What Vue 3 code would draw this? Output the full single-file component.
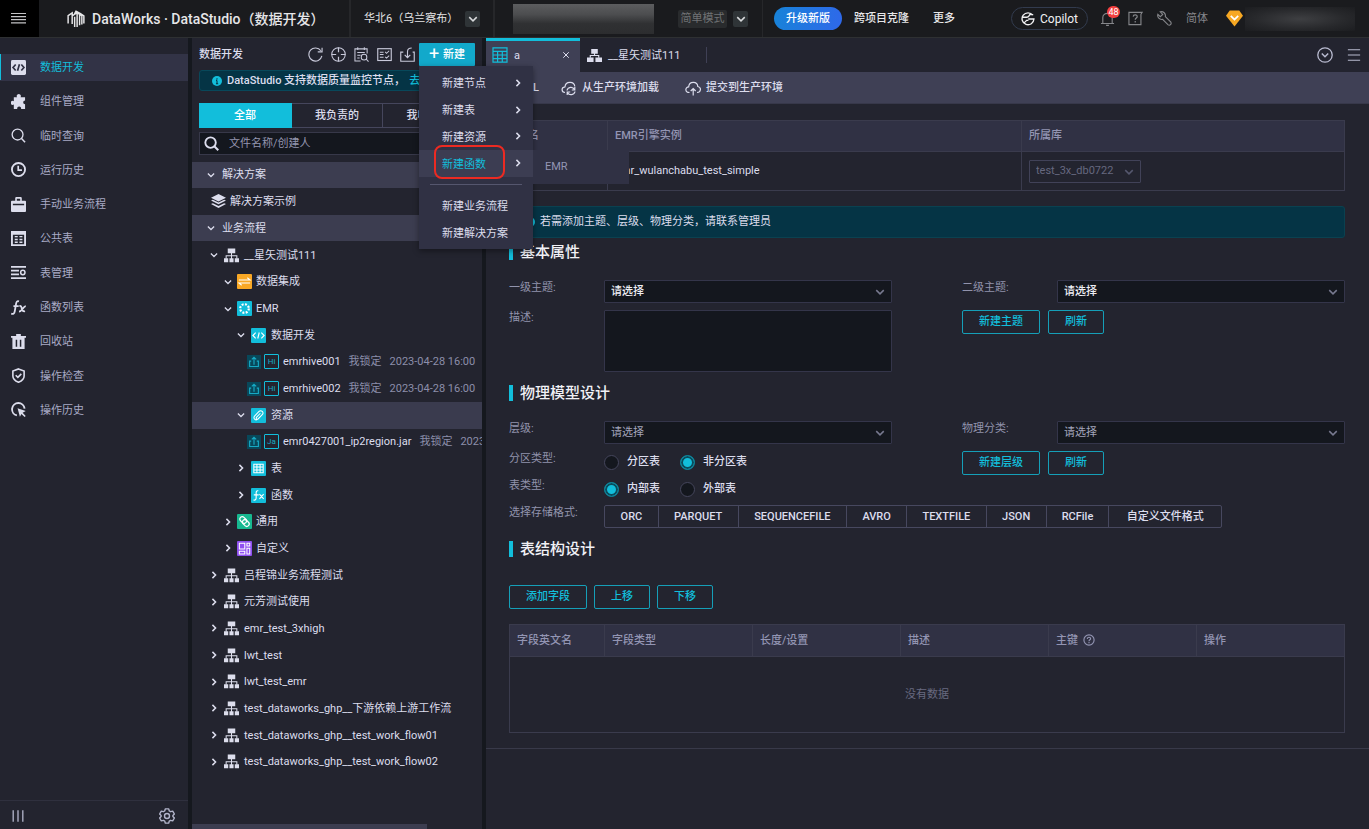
<script setup>
import { h, ref } from 'vue'

const S = 'fill="none" stroke="currentColor"'
const icons = {
  down: `<path ${S} stroke-width="2" d="M3 5.5l5 5 5-5"/>`,
  right: `<path ${S} stroke-width="2.4" d="M5.5 3l5 5-5 5"/>`,
  burger: `<path ${S} stroke-width="1.2" d="M0 3.5h15M0 6.6h15M0 9.7h15M0 12.8h15"/>`,
  menu: `<path ${S} stroke-width="1.4" d="M1 2h14M1 8h14M1 14h14"/>`,
  logo: `<path ${S} stroke-width="1.3" d="M1 12V5l3.6-2.4v9.9M4.6 5.2L9 2.4v12.8M6.8 15V6M11.2 13.6V3.8L9 2.4M6.6 3.6L8 1l4 2.2 3 2V12M13.2 12.8V5.2L11.2 3.8"/>`,
  code: `<rect x="0" y="0" width="16" height="16" rx="1.5" fill="currentColor"/><path fill="none" stroke="#303144" stroke-width="1.8" d="M5 4.8L2.2 8 5 11.2M11 4.8L13.8 8 11 11.2M9 4.5l-2 7"/>`,
  puzzle: `<path fill="currentColor" d="M3 3.4h3.4a2.2 2.2 0 1 1 3.8 0H15v3.5a2 2 0 1 0 0 4V16h-4.3a2.1 2.1 0 1 0-4 0H3v-4.8a2.2 2.2 0 1 1 0-3.6z"/>`,
  search: `<circle cx="7" cy="7" r="5.8" ${S} stroke-width="1.4"/><path ${S} stroke-width="1.6" d="M11 11l4 4.2"/>`,
  searchBold: `<circle cx="7" cy="7" r="5.6" ${S} stroke-width="2"/><path ${S} stroke-width="2.2" d="M11 11l4.2 4.2"/>`,
  clock: `<circle cx="8" cy="8" r="7" ${S} stroke-width="2"/><path ${S} stroke-width="1.8" d="M7.7 4v4.6h4"/>`,
  case: `<path fill="currentColor" fill-rule="evenodd" d="M4.5 4V1.2Q4.5 0 5.700 0h4.600Q11.500 0 11.500 1.200V4H15q1 0 1 1v10q0 1-1 1H1q-1 0-1-1V5q0-1 1-1zM6.200 4h3.600V1.800H6.200zM2 7.300v1.400h12V7.300z"/>`,
  grid: `<path fill="currentColor" fill-rule="evenodd" d="M0 0h16v16H0zM2 4v10h12V4z"/><path ${S} stroke-width="1.5" d="M4 6h3.200M9 6h3.200M4 9h3.200M9 9h3.200M4 12h3.200M9 12h3.200"/>`,
  manage: `<path ${S} stroke-width="1.7" d="M0 2h16M0 6h8.500M0 10h8.500M0 14h16"/><circle cx="12.600" cy="8" r="2.300" ${S} stroke-width="1.600"/>`,
  fx: `<path ${S} stroke-width="1.900" d="M8.500 1.500C6.500.8 5.800 2 5.500 3.600L4 12c-.4 2.400-1.500 3.500-3.800 2.600M2.600 6.500h5.600M9 6.500c1.600-.4 2 .3 2.500 2.500s1 3.500 3.500 3M15.800 6.500c-2.800 0-3.600 5.800-7.300 5.800"/>`,
  trash: `<path fill="currentColor" fill-rule="evenodd" d="M0 2h5.500V0h5v2H16v2h-1.500v12h-13V4H0zM5 6v7.500h1.600V6zM9.400 6v7.500H11V6z"/>`,
  shield: `<path ${S} stroke-width="1.700" d="M8 1l6 2.200v5.200c0 3-2.300 5.200-6 6.700-3.700-1.500-6-3.700-6-6.700V3.200z"/><path ${S} stroke-width="1.700" d="M5 7.700l2.300 2.200L11 6.200"/>`,
  cursor: `<path ${S} stroke-width="2" d="M6.300 14.300A6.700 6.700 0 1 1 14.500 7"/><path fill="currentColor" d="M7 6.600l8.700 3-3.300 1.900 3.300 3.300-1.200 1.200-3.400-3.300-1.600 3.100z"/>`,
  bars: `<path ${S} stroke-width="1.500" d="M2.500 1.500v13M8 1.500v13M13.500 1.500v13"/>`,
  gear: `<path ${S} stroke-width="1.400" stroke-linejoin="round" d="M6.300.9h3.400l.6 2.100 1.300.7 2.100-.6 1.700 2.900L13.900 7.500v1l1.500 1.500-1.700 2.900-2.100-.6-1.300.7-.6 2.100H6.300L5.700 13l-1.300-.7-2.100.6L.6 10 2.100 8.500v-1L.6 6l1.700-2.900 2.100.6L5.700 3z"/><circle cx="8" cy="8" r="2.500" ${S} stroke-width="1.400"/>`,
  refresh: `<path ${S} stroke-width="1.200" d="M14.800 9.500A7 7 0 1 1 13.700 4M15 .8v4.400h-4.600"/>`,
  target: `<circle cx="8" cy="8" r="7.200" ${S} stroke-width="1.100"/><path ${S} stroke-width="1.300" d="M8 .5v5M8 10.500v5M.5 8h5M10.500 8h5"/>`,
  listSearch: `<path ${S} stroke-width="1.100" d="M7 15H1V2h13v5M4 .3v3M11 .3v3M3.500 5.800h8M3.500 8.800h3.500M3.500 11.800h2.500"/><circle cx="10.700" cy="10.800" r="3" ${S} stroke-width="1.100"/><path ${S} stroke-width="1.100" d="M13 13l2.500 2.500"/>`,
  checks: `<rect x=".8" y="1.800" width="14.400" height="12.600" ${S} stroke-width="1.200"/><path ${S} stroke-width="1.100" d="M3 5.500h4M3 8h4M3 11h4M8.700 5.300l1.500 1.400L13 4M8.700 10.500l1.500 1.400L13 9.200"/>`,
  import: `<path ${S} stroke-width="1.200" d="M3.500 5.500H.8v9.700h14.400V5.500h-1.700M12.500 1C9.500 1 8 2.500 8 5v6M5 8.300l3 3 3-3"/>`,
  info: `<circle cx="8" cy="8" r="8" fill="currentColor"/><path fill="none" stroke="#053445" stroke-width="1.700" d="M8 3.500v2M8 7v5.500M6.500 7H8M6.300 12.500h3.600"/>`,
  layers: `<path fill="currentColor" d="M8 0l8 4-8 4-8-4zM0 7l2-.9 6 2.900 6-2.900 2 .9-8 4zM0 10.700l2-.9 6 2.900 6-2.900 2 .9-8 4.300z"/>`,
  flow: `<path fill="currentColor" d="M4 .5h8v5H4zM0 11h4.500v4.300H0zM5.800 11h4.400v4.300H5.800zM11.500 11H16v4.300h-4.500z"/><path ${S} stroke-width="1.100" d="M8 5v7M2.300 11.500V8.300h11.400v3.200"/>`,
  flowTab: `<path fill="currentColor" d="M4.500 1h7v5h-7zM0 10h7v5H0zM9 10h7v5H9z"/><path ${S} stroke-width="1.200" d="M8 5v3M3.500 10.500V8h9v2.500"/>`,
  swap: `<rect width="16" height="16" rx="1" fill="#f9a825"/><path fill="none" stroke="#fff" stroke-width="1.100" d="M2 6.500h12L11 4M14 9.500H2L5 12"/>`,
  emr: `<rect width="16" height="16" rx="1" fill="#12bedb"/><circle cx="8" cy="8" r="4.600" fill="none" stroke="#fff" stroke-width="2.300" stroke-dasharray="2.100 1.510"/>`,
  codeSq: `<rect width="16" height="16" rx="1" fill="#12bedb"/><path fill="none" stroke="#fff" stroke-width="1.200" d="M5 5L2 8l3 3M11 5l3 3-3 3M8.800 4.800l-1.600 6.400"/>`,
  clip: `<rect width="16" height="16" rx="1" fill="#12bedb"/><path fill="none" stroke="#fff" stroke-width="1.100" d="M11.500 7.500l-4 4.200c-2.500 2.500-6-.8-3.500-3.400l4.600-4.600c2-2 5.700.8 3.600 3.200l-4.500 4.600c-1.200 1.200-3-.3-1.700-1.700l4-4.200"/>`,
  tableSq: `<rect width="16" height="16" rx="1" fill="#12bedb"/><path fill="none" stroke="#fff" stroke-width="1.100" d="M3 3.500h10v9H3zM3 6.500h10M3 9.500h10M6.300 3.500v9M9.700 3.500v9"/>`,
  fxSq: `<rect width="16" height="16" rx="1" fill="#12bedb"/><path fill="none" stroke="#fff" stroke-width="1.200" d="M7.800 3C6 2.600 5.600 3.600 5.500 5v5.500c0 2-1 2.800-2.900 2.300M3 7.300h5.200M9 6.500l4.500 5M13.500 6.500l-4.500 5"/>`,
  link: `<rect width="16" height="16" rx="1" fill="#17b890"/><g fill="none" stroke="#fff" stroke-width="1.300"><rect x="2.600" y="3.800" width="8" height="5.200" rx="2.600" transform="rotate(45 6.600 6.400)"/><rect x="5.400" y="7" width="8" height="5.200" rx="2.600" transform="rotate(45 9.400 9.600)"/></g>`,
  custom: `<rect width="16" height="16" rx="1" fill="#8f4ff0"/><path fill="none" stroke="#fff" stroke-width="1.100" d="M2.500 2.500h5.800v6H2.500zM2.500 11h5.800v2.800H2.500zM10.600 2.500h3v2.800h-3zM10.600 7.800h3v6h-3z"/>`,
  share: `<rect width="16" height="16" fill="#08485a"/><path fill="none" stroke="#17a9c4" stroke-width="1.300" d="M4.800 7H3v6.200h10V7h-1.800M8 11V3M5.500 5L8 2.700 10.500 5"/>`,
  tableTab: `<path ${S} stroke-width="1.200" d="M1 .8h14v14.400H1zM1 4.400h14M1 8h14M1 11.600h14M5.600 4.400v10.800M10.300 4.400v10.800"/>`,
  close: `<path ${S} stroke-width="2" d="M2.500 2.500l11 11M13.500 2.500l-11 11"/>`,
  cloudDown: `<path ${S} stroke-width="1.200" d="M4 12.500C.3 12.300-.1 7.300 4 6.800 4.500 1 13.300.8 13.800 6.500"/><path ${S} stroke-width="1.200" d="M6 10.500a4 4 0 0 1 7.500-1M13.800 7v3h-3M14 11.500a4 4 0 0 1-7.500 1M6.200 15v-3h3"/>`,
  cloudUp: `<path ${S} stroke-width="1.200" d="M4.500 12.500C-.3 12.500-.1 7 3.700 6.800 4 1 12.400.8 12.800 6.500c3.900.6 3.300 6-.8 6M8.200 15.500V8.700M5.700 11L8.200 8.500l2.500 2.500"/>`,
  copilot: `<path ${S} stroke-width="1.500" d="M13.500 3.700A6.800 6.800 0 1 0 14.800 8H8.300M1.500 6h5.200c1 0 1.800-.5 2.500-1.500L10 3h4M3 13l3.500-3.500h2"/>`,
  bell: `<path ${S} stroke-width="1.200" d="M1 13.300h14M3 13V7c0-6 10-6 10 0v6M6.500 15.300h3M8 1v1.500"/>`,
  help: `<path ${S} stroke-width="1.200" d="M1 1.500h14l-1.200 2v11H1z"/><path ${S} stroke-width="1.300" d="M5.500 6c.2-2.600 4.600-2.400 4.300.2C9.600 7.500 7.700 7.500 7.700 9.300M7.700 10.700v1.600"/>`,
  wrench: `<path ${S} stroke-width="1.200" d="M3.500.9C6.700 0 9.600 2.700 8.900 6l5.900 5.900c1 2-1 4-2.900 2.900L6 8.900C2.700 9.600 0 6.700.9 3.600l2.600 2.500 2.600-2.500z"/>`,
  gem: `<path fill="#f7a823" d="M3.500.5h9L16 5.500 8 15.500 0 5.500z"/><path fill="none" stroke="#fff" stroke-width="1.700" d="M4.500 5.500L8 9l3.500-3.500"/>`,
  circleDown: `<circle cx="8" cy="8" r="7.200" ${S} stroke-width="1.300"/><path ${S} stroke-width="1.500" d="M4.800 6.500L8 9.700l3.200-3.200"/>`,
  question: `<circle cx="8" cy="8" r="6.800" ${S} stroke-width="1.500"/><path ${S} stroke-width="1.500" d="M5.800 6.500c0-3 4.400-2.700 4.400-.2C10.200 7.700 8 7.700 8 9.500M8 10.800v1.500"/>`
}
const Icon = (props) => h('svg', { viewBox: '0 0 16 16', 'aria-hidden': 'true', innerHTML: icons[props.name] })
Icon.props = ['name']

const nav = [
  ['code', '数据开发'], ['puzzle', '组件管理'], ['search', '临时查询'], ['clock', '运行历史'],
  ['case', '手动业务流程'], ['grid', '公共表'], ['manage', '表管理'], ['fx', '函数列表'],
  ['trash', '回收站'], ['shield', '操作检查'], ['cursor', '操作历史']
]
const panelTools = [['refresh', '刷新'], ['target', '定位'], ['listSearch', '代码搜索'], ['checks', '批量操作'], ['import', '导入']]
const tree = [
  { k: 'section', t: '解决方案', c: 'down' },
  { k: 'solution', t: '解决方案示例', i: 'layers' },
  { k: 'section', t: '业务流程', c: 'down' },
  { k: 'l1', t: '__星矢测试111', c: 'down', i: 'flow' },
  { k: 'l2', t: '数据集成', c: 'down', i: 'swap' },
  { k: 'l2', t: 'EMR', c: 'down', i: 'emr' },
  { k: 'l3', t: '数据开发', c: 'down', i: 'codeSq' },
  { k: 'leaf', t: 'emrhive001', tag: 'Hi' },
  { k: 'leaf', t: 'emrhive002', tag: 'Hi' },
  { k: 'l3', t: '资源', c: 'down', i: 'clip', on: true },
  { k: 'leaf', t: 'emr0427001_ip2region.jar', tag: 'Ja' },
  { k: 'l3', t: '表', c: 'right', i: 'tableSq' },
  { k: 'l3', t: '函数', c: 'right', i: 'fxSq' },
  { k: 'l2', t: '通用', c: 'right', i: 'link' },
  { k: 'l2', t: '自定义', c: 'right', i: 'custom' },
  ...['吕程锦业务流程测试', '元芳测试使用', 'emr_test_3xhigh', 'lwt_test', 'lwt_test_emr',
    'test_dataworks_ghp__下游依赖上游工作流', 'test_dataworks_ghp__test_work_flow01',
    'test_dataworks_ghp__test_work_flow02'].map((t) => ({ k: 'l1', t, c: 'right', i: 'flow' }))
]
const menuTop = ['新建节点', '新建表', '新建资源', '新建函数']
const formats = ['ORC', 'PARQUET', 'SEQUENCEFILE', 'AVRO', 'TEXTFILE', 'JSON', 'RCFile', '自定义文件格式']
const columns = ['字段英文名', '字段类型', '长度/设置', '描述', '主键', '操作']
const partition = ref('no')
const tableKind = ref('inner')
const description = ref('')
const keyword = ref('')
</script>

<template>
  <div class="app">
    <header class="top">
      <button class="burger" aria-label="菜单"><Icon name="burger" class="i16" /></button>
      <div class="brand"><Icon name="logo" class="i18" /><span>DataWorks · DataStudio（数据开发）</span></div>
      <div class="region"><span>华北6（乌兰察布）</span><button class="drop" aria-label="选择地域"><Icon name="down" class="i12" /></button></div>
      <div class="project">
        <span class="masked"></span>
        <span class="mode">简单模式</span>
        <button class="drop" aria-label="选择模式"><Icon name="down" class="i12" /></button>
      </div>
      <button class="upgrade">升级新版</button>
      <a href="#" class="toplink">跨项目克隆</a>
      <a href="#" class="toplink more">更多</a>
      <div class="account">
        <button class="copilot"><Icon name="copilot" class="i14" />Copilot</button>
        <button class="bell" aria-label="消息"><Icon name="bell" class="i15" /><span class="badge">48</span></button>
        <button aria-label="帮助"><Icon name="help" class="i15" /></button>
        <button aria-label="工具"><Icon name="wrench" class="i15" /></button>
        <button class="lang">简体</button>
        <div class="user"><Icon name="gem" class="i17" /><span class="username"></span></div>
      </div>
    </header>

    <div class="work">
      <nav class="side">
        <div class="navlist">
          <a v-for="([icon, text], n) in nav" :key="text" href="#" :class="{ on: n === 0 }">
            <Icon :name="icon" class="i15" /><span>{{ text }}</span>
          </a>
        </div>
        <div class="sidefoot">
          <button aria-label="收起"><Icon name="bars" class="i14" /></button>
          <button aria-label="设置"><Icon name="gear" class="i16" /></button>
        </div>
      </nav>

      <aside class="panel">
        <div class="panelhead">
          <h2>数据开发</h2>
          <div class="tools">
            <button v-for="[icon, text] in panelTools" :key="icon" :aria-label="text"><Icon :name="icon" class="i15" /></button>
          </div>
          <div class="create">
            <button class="new"><span class="plus">+</span><span class="newtext">新建</span></button>
            <div class="menu">
              <div class="group">
                <button v-for="m in menuTop" :key="m" :class="{ on: m === '新建函数' }">
                  <span>{{ m }}</span><Icon name="right" class="i10" />
                </button>
              </div>
              <hr />
              <div class="group two">
                <button><span>新建业务流程</span></button>
                <button><span>新建解决方案</span></button>
              </div>
              <div class="submenu"><button>EMR</button></div>
              <div class="mark"></div>
            </div>
          </div>
        </div>
        <p class="tip"><Icon name="info" class="i10" /><span>DataStudio 支持数据质量监控节点，</span><a href="#">去查看</a></p>
        <div class="filter">
          <button class="on">全部</button><button>我负责的</button><button>我收藏的</button>
        </div>
        <label class="find">
          <Icon name="searchBold" class="i15" />
          <input v-model="keyword" type="text" placeholder="文件名称/创建人" aria-label="文件名称/创建人" />
        </label>
        <ul class="tree">
          <li v-for="(r, n) in tree" :key="n" :class="[r.k, { on: r.on }]">
            <Icon v-if="r.c" :name="r.c" class="i10" />
            <Icon v-if="r.i" :name="r.i" class="i15" />
            <template v-if="r.tag">
              <Icon name="share" class="i14" /><span class="tag">{{ r.tag }}</span>
            </template>
            <span class="name">{{ r.t }}</span>
            <template v-if="r.tag"><span class="meta">我锁定</span><span class="meta">2023-04-28 16:00</span></template>
          </li>
        </ul>
        <div class="hscroll"></div>
      </aside>

      <main class="main">
        <div class="tabs">
          <div class="tab on"><Icon name="tableTab" class="i16 cyan" /><span>a</span><button aria-label="关闭"><Icon name="close" class="i8" /></button></div>
          <div class="tab"><Icon name="flowTab" class="i15" /><span>__星矢测试111</span></div>
          <div class="tabtools">
            <button aria-label="全部标签"><Icon name="circleDown" class="i16" /></button>
            <button aria-label="列表"><Icon name="menu" class="i14" /></button>
          </div>
        </div>
        <div class="bar">
          <button class="ddl">DDL</button>
          <button><Icon name="cloudDown" class="i16" />从生产环境加载</button>
          <button><Icon name="cloudUp" class="i16" />提交到生产环境</button>
        </div>
        <div class="body">
          <table class="meta-table">
            <thead><tr><th class="c1">表名</th><th class="c2">EMR引擎实例</th><th>所属库</th></tr></thead>
            <tbody>
              <tr>
                <td>a</td><td>emr_wulanchabu_test_simple</td>
                <td><div class="pick db"><select disabled aria-label="所属库"><option>test_3x_db0722</option></select><Icon name="down" class="i12" /></div></td>
              </tr>
            </tbody>
          </table>
          <p class="notice"><Icon name="info" class="i10" />若需添加主题、层级、物理分类，请联系管理员</p>

          <h3>基本属性</h3>
          <div class="cols">
            <div class="col">
              <div class="row"><label for="t1">一级主题:</label><div class="pick"><select id="t1"><option>请选择</option></select><Icon name="down" class="i12" /></div></div>
              <div class="row"><label for="desc">描述:</label><textarea id="desc" v-model="description"></textarea></div>
            </div>
            <div class="col">
              <div class="row"><label for="t2">二级主题:</label><div class="pick"><select id="t2"><option>请选择</option></select><Icon name="down" class="i12" /></div></div>
              <div class="acts"><button>新建主题</button><button>刷新</button></div>
            </div>
          </div>

          <h3>物理模型设计</h3>
          <div class="cols">
            <div class="col">
              <div class="row"><label for="lv">层级:</label><div class="pick dim"><select id="lv"><option>请选择</option></select><Icon name="down" class="i12" /></div></div>
              <div class="row" role="radiogroup" aria-label="分区类型">
                <span class="lab">分区类型:</span>
                <div class="radios">
                  <label><input v-model="partition" type="radio" name="partition" value="yes" />分区表</label>
                  <label><input v-model="partition" type="radio" name="partition" value="no" />非分区表</label>
                </div>
              </div>
              <div class="row" role="radiogroup" aria-label="表类型">
                <span class="lab">表类型:</span>
                <div class="radios">
                  <label><input v-model="tableKind" type="radio" name="kind" value="inner" />内部表</label>
                  <label><input v-model="tableKind" type="radio" name="kind" value="outer" />外部表</label>
                </div>
              </div>
            </div>
            <div class="col">
              <div class="row"><label for="pc">物理分类:</label><div class="pick dim"><select id="pc"><option>请选择</option></select><Icon name="down" class="i12" /></div></div>
              <div class="acts"><button>新建层级</button><button>刷新</button></div>
            </div>
          </div>
          <div class="row formatrow">
            <span class="lab">选择存储格式:</span>
            <div class="formats"><button v-for="f in formats" :key="f">{{ f }}</button></div>
          </div>

          <h3>表结构设计</h3>
          <div class="acts fieldacts"><button>添加字段</button><button>上移</button><button>下移</button></div>
          <table class="fields">
            <thead><tr><th v-for="(c, n) in columns" :key="c" :class="{ first: n === 0 }">{{ c }}<Icon v-if="c === '主键'" name="question" class="i12" /></th></tr></thead>
            <tbody><tr><td colspan="6">没有数据</td></tr></tbody>
          </table>
        </div>
      </main>
    </div>
  </div>
</template>

<style>
html, body { margin: 0; height: 100%; background: #23242f; }
#app { height: 100%; }
</style>

<style scoped>
.app { display: flex; flex-direction: column; min-height: 100vh; font: 11px/16px Roboto, "Noto Sans CJK SC", sans-serif; color: #dcdded; background: #23242f; }
.app * { box-sizing: border-box; }
svg { display: block; flex: none; }
button { font: inherit; color: inherit; background: none; border: 0; padding: 0; white-space: nowrap; }
a { color: inherit; text-decoration: none; white-space: nowrap; }
p, h2, h3, ul { margin: 0; padding: 0; font-size: inherit; }
.i8 { width: 8px; height: 8px; }
.i10 { width: 10px; height: 10px; }
.i12 { width: 12px; height: 12px; }
.i14 { width: 14px; height: 14px; }
.i15 { width: 15px; height: 15px; }
.i16 { width: 16px; height: 16px; }
.i17 { width: 17px; height: 17px; }
.i18 { width: 18px; height: 18px; }
.cyan { color: #12bedb; }

.top { display: flex; align-items: center; height: 38px; background: #1a1b1e; border-bottom: 1px solid #2e3032; padding-right: 14px; font-weight: 500; color: #e6e6e8; white-space: nowrap; }
.burger { width: 39px; height: 37px; padding-bottom: 2px; padding-right: 2px; background: #000; display: grid; place-items: center; align-self: flex-start; color: #c4c4c6; }
.brand { width: 312px; height: 37px; padding-left: 28px; display: flex; align-items: center; gap: 7px; border-right: 2px solid #26272a; font-size: 14px; }
.region { width: 144px; height: 37px; padding: 0 13px 0 13px; display: flex; align-items: center; justify-content: space-between; border-right: 2px solid #26272a; font-weight: 400; }
.drop { width: 15px; height: 16px; border-radius: 2px; background: #2f3437; display: grid; place-items: center; color: #d8dadc; }
.project { width: 268px; height: 37px; padding-left: 18px; display: flex; align-items: center; gap: 6px; border-right: 1px solid #26272a; font-weight: 400; }
.masked { width: 141px; height: 30px; margin-right: 18px; background: linear-gradient(#5c5d5f, #4c4d4f 35%, #303133 65%, #2c2d2f); }
.mode { width: 49px; height: 18px; line-height: 18px; text-align: center; background: #292b2d; color: #707274; border-radius: 2px; }
.upgrade { width: 68px; height: 23px; margin-left: 11px; border-radius: 12px; background: linear-gradient(100deg, #1783d8, #2f68ea); color: #fff; }
.toplink { margin-left: 12px; }
.more { margin-left: 24px; }
.account { margin-left: auto; display: flex; align-items: center; gap: 14px; color: #85868a; font-weight: 400; }
.copilot { width: 77px; height: 23px; display: flex; align-items: center; justify-content: center; gap: 5px; border: 1px solid #323b4e; border-radius: 12px; font-size: 12px; color: #f0f0f2; }
.bell { position: relative; margin: 0 -1px 0 -2px; }
.badge { position: absolute; left: 7px; top: -5px; width: 13px; height: 12px; border-radius: 6px; background: #f5403f; color: #fff; font-size: 9px; line-height: 12px; text-align: center; }
.user { display: flex; align-items: center; gap: 2px; margin-left: 4px; }
.username { width: 110px; height: 24px; background: radial-gradient(ellipse at center, #3e3f42, #27282b 60%, #1c1d20); }

.work { flex: 1; display: flex; gap: 4px; background: #15181e; }
.side { width: 188px; flex: none; background: #23242f; display: flex; flex-direction: column; justify-content: space-between; }
.navlist { display: grid; grid-auto-rows: 1fr; height: 377px; margin-top: 12px; }
.navlist a { display: flex; align-items: center; gap: 14px; padding-left: 11px; color: #a9abc6; }
.navlist a svg { color: #dcddec; }
.navlist a span { padding-top: 2px; }
.navlist a.on { color: #12bedb; background: linear-gradient(#323346, #323346) center / 100% 27px no-repeat; position: relative; }
.navlist a.on::before { content: ""; position: absolute; left: 0; top: 4px; bottom: 4px; width: 1px; background: #12bedb; }
.sidefoot { height: 29px; border-top: 1px solid #2f303e; display: flex; align-items: center; justify-content: space-between; padding: 2px 13px 0 11px; color: #b3b5cb; }

.panel { width: 290px; flex: none; background: #23242f; display: flex; flex-direction: column; }
.panelhead { display: flex; align-items: center; height: 32px; padding: 0 7px; }
.panelhead h2 { flex: 1; font-weight: 500; padding-top: 2px; }
.tools { display: flex; gap: 8px; margin-right: 4px; color: #c8c9da; }
.create { position: relative; z-index: 5; }
.new { width: 56px; height: 23px; background: #12a9cb; border-radius: 1px; color: #fff; display: flex; align-items: center; justify-content: center; gap: 4px; font-weight: 500; }
.newtext { padding-top: 2px; }
.plus { font-size: 18px; font-weight: 400; }
.menu { position: absolute; left: 0; top: 23px; width: 114px; padding: 4px 0 3px; background: #303144; box-shadow: 0 2px 6px #0006; }
.group { display: grid; grid-auto-rows: 1fr; height: 107px; }
.group.two { height: 53px; }
.group button { display: flex; align-items: center; justify-content: space-between; padding: 0 10px 0 23px; color: #dcdded; }
.group button span { padding-top: 3px; }
.group button.on { background: #3c3d52; }
.group button.on span { color: #12bedb; }
.menu hr { border: 0; height: 1px; background: #55566e; margin: 7px 11px 8px; }
.submenu { position: absolute; left: 114px; top: 84px; width: 96px; height: 34px; background: #303144; display: flex; align-items: center; padding-left: 12px; color: #9496b4; }
.mark { position: absolute; left: 15px; top: 79px; width: 71px; height: 34px; border: 2px solid #ec2a22; border-radius: 8px; }
.tip { margin: 0 7px; height: 21px; border: 1px solid #08485a; border-radius: 3px; background: #053445; padding-left: 12px; display: flex; align-items: center; overflow: hidden; white-space: nowrap; font-weight: 500; }
.tip svg { color: #12bedb; margin-right: 5px; }
.tip a { color: #12bedb; margin-left: 4px; }
.filter { display: grid; grid-template-columns: 93px 91px 1fr; height: 25px; margin: 12px 7px 0; font-weight: 500; }
.filter button { border: 1px solid #45465c; border-left: 0; }
.filter button.on { background: #12bedb; border-color: #12bedb; color: #fff; }
.find { margin: 4px 7px 7px; height: 23px; border: 1px solid #373849; background: #14171e; display: flex; align-items: center; padding-left: 4px; gap: 10px; }
.find input { flex: 1; min-width: 0; border: 0; outline: 0; background: none; padding: 0; font: inherit; color: #dcdded; }
.find input::placeholder { color: #9496b0; opacity: 1; }
.tree { list-style: none; display: grid; grid-auto-rows: 1fr; height: 613px; overflow: hidden; }
.tree li { display: flex; align-items: center; white-space: nowrap; overflow: hidden; }
.tree .section { background: #3c3d50; padding-left: 14px; gap: 6px; border-bottom: 1px solid #23242f; }
.tree .solution { padding-left: 19px; gap: 4px; }
.tree .l1 { padding-left: 17px; gap: 5px; }
.tree .l2 { padding-left: 31px; gap: 4px; }
.tree .l3 { padding-left: 44px; gap: 5px; }
.tree .leaf { padding-left: 55px; gap: 3px; }
.tree .l1 .i15 { color: #dcddec; }
.tree .name { padding-top: 1px; }
.tree .on { background: #3a3b4e; }
.tag { flex: none; width: 15px; height: 15px; border: 1px solid #12bedb; border-radius: 1px; color: #17a9c4; font-size: 8px; line-height: 14px; text-align: center; margin-right: 1px; }
.meta { color: #8c8eaa; margin-left: 5px; padding-top: 1px; }
.hscroll { margin-top: auto; width: 81%; height: 5px; background: #3c3d50; }

.main { flex: 1; min-width: 0; background: #23242f; }
.tabs { height: 34px; display: flex; align-items: center; }
.tab { height: 34px; display: flex; align-items: center; gap: 6px; padding-left: 7px; }
.tab.on { width: 94px; background: #3f4055; border-top: 3px solid #12bedb; padding: 0 10px 3px 6px; }
.tab.on button { margin-left: auto; }
.tab:not(.on) { width: 127px; background: linear-gradient(#3f4055, #3f4055) right / 1px 16px no-repeat; }
.tab span { padding-top: 1px; }
.tabtools { margin-left: auto; display: flex; gap: 14px; padding-right: 8px; color: #b9bbd0; }
.bar { height: 32px; background: #3f4055; border-bottom: 1px solid #37384a; display: flex; align-items: center; gap: 26px; padding: 1px 0 0 29px; font-weight: 500; }
.bar button { display: flex; align-items: center; gap: 5px; }
.bar .ddl { width: 24px; margin-right: -4px; justify-content: flex-end; }
.body { padding: 16px 24px 15px 23px; border-bottom: 1px solid #383949; }
table { width: 100%; table-layout: fixed; border-collapse: collapse; }
th, td { border: 1px solid #3a3b4d; padding: 0 7px; text-align: left; }
th { background: #303144; color: #9395b3; font-weight: 500; }
.meta-table th { height: 31px; }
.meta-table td { height: 39px; }
.c1 { width: 98px; }
.c2 { width: 414px; }
.notice { margin-top: 15px; height: 32px; border: 1px solid #0a4150; border-radius: 3px; background: #053445; display: flex; align-items: center; padding-left: 15px; gap: 5px; }
.notice svg { color: #12bedb; }
h3 { margin: 13px 0 20px; height: 16px; border-left: 4px solid #12bedb; padding-left: 7px; font-size: 15px; line-height: 16px; font-weight: 500; color: #f1f1f6; }
.notice + h3 { margin-top: 6px; }
.cols { display: grid; grid-template-columns: 1fr 1fr; column-gap: 70px; }
.col { display: flex; flex-direction: column; gap: 7px; min-width: 0; }
.row { display: grid; grid-template-columns: 95px 1fr; align-items: start; }
.row > label, .lab { line-height: 15px; color: #9193ac; }
.pick { position: relative; height: 23px; }
.pick select { appearance: none; width: 100%; height: 100%; background: #14171e; border: 1px solid #34354a; border-radius: 1px; color: #eeeef4; font: inherit; font-weight: 500; padding: 0 22px 0 6px; outline: 0; }
.pick.dim select { color: #a3a5bb; font-weight: 400; }
.pick svg { position: absolute; right: 6px; top: 6px; color: #77798f; pointer-events: none; }
.pick.db { width: 112px; }
.pick.db select { background: #23242f; border-color: #414258; color: #66687f; opacity: 1; font-weight: 400; }
.pick.db svg { color: #55576e; }
textarea { display: block; width: 100%; height: 62px; background: #14171e; border: 1px solid #34354a; border-radius: 1px; resize: none; font: inherit; color: inherit; padding: 4px 6px; }
.acts { display: flex; gap: 8px; }
.acts button { height: 24px; padding: 0 15px; min-width: 56px; border: 1px solid #159fb8; border-radius: 2px; color: #12bedb; font-weight: 500; }
.acts button:first-child { min-width: 78px; }
.radios { display: grid; grid-template-columns: 76px 90px; height: 20px; padding-top: 2px; }
.radios label { display: flex; align-items: center; gap: 8px; font-weight: 500; }
input[type="radio"] { appearance: none; width: 15px; height: 15px; margin: 0; border: 1px solid #45465c; border-radius: 50%; background: #14171e; }
input[type="radio"]:checked { border-color: #0e7f94; background: #12bedb; box-shadow: inset 0 0 0 2px #0a4c5c; }
.formatrow { margin-top: 7px; }
.formats { display: grid; grid-template-columns: 54fr 80fr 109fr 60fr 80fr 60fr 63fr 112fr; max-width: 618px; height: 23px; border: 1px solid #47485f; border-radius: 2px; }
.formats button { border-right: 1px solid #47485f; font-weight: 500; }
.formats button:last-child { border-right: 0; }
.acts.fieldacts { gap: 7px; margin: 28px 0 15px; }
.fields th { height: 32px; }
.fields th svg { display: inline-block; vertical-align: -2px; margin-left: 5px; }
.fields .first { width: 95px; }
.fields td { height: 76px; text-align: center; color: #686a80; }
</style>
